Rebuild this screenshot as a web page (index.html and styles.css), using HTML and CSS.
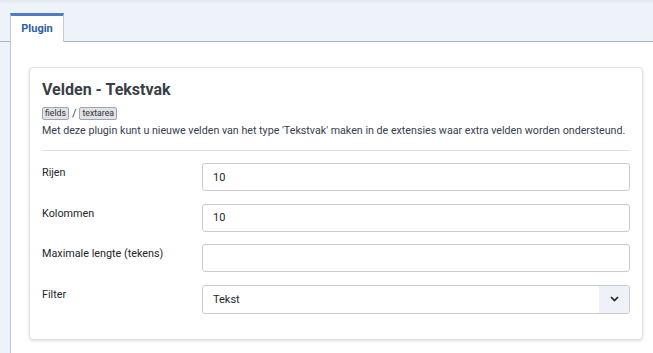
FILE: index.html
```html
<!DOCTYPE html>
<html>
<head>
    <title>Plugin - Velden - Tekstvak</title>
    <link rel="stylesheet" href="styles.css">
</head>
<body>
    <div class="tabs">
        <button class="tab active">Plugin</button>
    </div>

    <div class="tab-content">
        <div class="card">
            <h2>Velden - Tekstvak</h2>
            <div class="badges">
                <span class="badge">fields</span>
                <span class="sep">/</span>
                <span class="badge">textarea</span>
            </div>
            <div class="info">Met deze plugin kunt u nieuwe velden van het type 'Tekstvak' maken in de extensies waar extra velden worden ondersteund.</div>
            <hr>

            <div class="row">
                <label>Rijen</label>
                <input type="text" value="10">
            </div>
            <div class="row">
                <label>Kolommen</label>
                <input type="text" value="10">
            </div>
            <div class="row">
                <label>Maximale lengte (tekens)</label>
                <input type="text" value="">
            </div>
            <div class="row">
                <label>Filter</label>
                <div class="select">
                    <span>Tekst</span>
                    <span class="arrow">
                        <svg width="9" height="6" viewBox="0 0 9 6"><path d="M1 1 L4.5 4.5 L8 1" fill="none" stroke="#222" stroke-width="1.7"/></svg>
                    </span>
                </div>
            </div>
        </div>
    </div>
</body>
</html>
```

FILE: styles.css
```css
body { font-family: Roboto, "Noto Sans", Arial, sans-serif; background: linear-gradient(#e3e6eb, #eef2f9 4px); color: #22262a; margin: 0; padding: 0; height: 353px; overflow: hidden; }
.tabs { display: flex; padding: 13px 0 0 10px; border-bottom: 1px solid #a9b5c6; }
.tab { width: 54px; height: 29px; margin-bottom: -1px; background: white; border: 1px solid #c3ccd9; border-top: 3px solid #4f7cc4; border-bottom: none; color: #2e5ea6; font-family: inherit; font-weight: bold; font-size: 11px; padding: 0 0 2px; }
.tab-content { margin-left: 10px; border-left: 1px solid #b9c4d4; background: white; padding: 25px 10px 14px 18px; }
.card { border: 1px solid #dde1e6; border-radius: 4px; box-shadow: 0 1px 3px rgba(0, 0, 0, 0.14); padding: 12px 12px 25px; }
h2 { margin: 0 0 8px; font-size: 16px; line-height: 19px; color: #3a3f46; }
.badges { display: flex; align-items: center; gap: 3px; height: 13px; }
.badge { font-size: 8.7px; line-height: 11px; padding: 0 2px; background: #dfe2e7; border: 1px solid #9fa5ad; border-radius: 2px; color: #333; }
.sep { font-size: 11px; color: #444; }
.info { margin-top: 3px; font-size: 10.7px; line-height: 16px; color: #36404e; white-space: nowrap; }
hr { border: none; border-top: 1px solid #dfe3e8; margin: 11px 0 12px; }
.row { display: flex; margin-bottom: 12.5px; }
.row:last-child { margin-bottom: 0; }
label { width: 160px; flex-shrink: 0; font-size: 10.8px; padding-top: 3px; }
input { flex: 1; height: 28px; padding: 0 10px; border: 1px solid #c8ccd2; border-radius: 3px; box-sizing: border-box; font-family: inherit; font-size: 11px; color: #22262a; }
.select { flex: 1; height: 29px; display: flex; align-items: center; border: 1px solid #c8ccd2; border-radius: 3px; box-sizing: border-box; font-size: 11px; overflow: hidden; }
.select span:first-child { flex: 1; padding-left: 10px; }
.arrow { width: 30px; height: 100%; display: flex; align-items: center; justify-content: center; background: #eef2f8; }
```
